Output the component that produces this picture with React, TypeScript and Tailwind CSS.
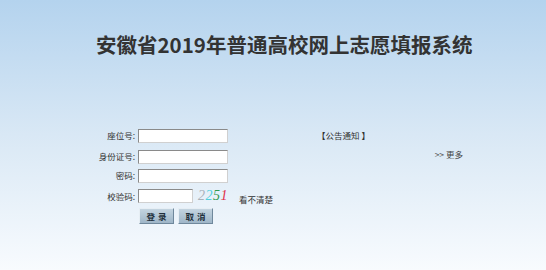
import React from "react";

const cjk = { fontFamily: '"Noto Sans CJK SC", "Noto Sans", sans-serif' };

function Row({ label, children, className = "" }: { label: string; children: React.ReactNode; className?: string }) {
  return (
    <div className={"flex items-center whitespace-nowrap " + className}>
      <div className="w-[48px] shrink-0 text-right text-[8.5px] leading-none text-[#333] pr-[1px]">{label}</div>
      <div className="ml-[2px] flex items-center">{children}</div>
    </div>
  );
}

function Input({ w = "w-[90px]" }: { w?: string }) {
  return (
    <div className={w + " shrink-0 h-[14px] bg-white border border-t-[#8a8a8a] border-l-[#8a8a8a] border-r-[#d0d0d0] border-b-[#d0d0d0]"} />
  );
}

function Btn({ text }: { text: string }) {
  return (
    <div className="w-[35px] h-[16px] flex items-center justify-center bg-gradient-to-b from-[#c3d4e0] to-[#9fb6c8] border border-t-[#e6eef4] border-l-[#e6eef4] border-r-[#6f889c] border-b-[#6f889c] text-[8.5px] leading-none font-bold text-[#22303c] tracking-[3px] pl-[3px]">
      {text}
    </div>
  );
}

export default function App() {
  return (
    <div className="w-[546px] h-[270px] overflow-hidden bg-gradient-to-b from-[#b4d3ee] via-[#d9e8f5] to-[#f8fbfe]" style={cjk}>
      <h1 className="pt-[34px] pl-[96px] text-[20.5px] font-bold leading-none text-[#333] whitespace-nowrap">
        安徽省2019年普通高校网上志愿填报系统
      </h1>
      <div className="flex mt-[74px]">
        <div className="ml-[88px] w-[141px] shrink-0 flex flex-col">
          <Row label="座位号:"><Input /></Row>
          <Row label="身份证号:" className="mt-[7px]"><Input /></Row>
          <Row label="密码:" className="mt-[5px]"><Input /></Row>
          <Row label="校验码:" className="mt-[6px]">
            <Input w="w-[55px]" />
            <span className="ml-[5px] text-[14px] italic leading-none tracking-[0.5px]" style={{ fontFamily: '"Liberation Serif", serif' }}>
              <span className="text-[#a8b0b8]">2</span>
              <span className="text-[#4fd0dc]">2</span>
              <span className="text-[#2f9a4f]">5</span>
              <span className="text-[#e0304a]">1</span>
            </span>
            <span className="ml-[11px] mt-[6px] text-[8.5px] leading-none text-[#333]">看不清楚</span>
          </Row>
          <div className="flex mt-[5px] ml-[51px] gap-[4px]">
            <Btn text="登录" />
            <Btn text="取消" />
          </div>
        </div>
        <div className="ml-[88px] w-[146px] flex flex-col">
          <div className="mt-[2px] text-[8.5px] leading-none text-[#333] whitespace-nowrap">
            <span className="font-bold">【</span>公告通知 <span className="font-bold">】</span>
          </div>
          <div className="mt-[11px] self-end text-[8.5px] leading-none text-[#444] whitespace-nowrap">
            <span className="text-[#555]">&gt;&gt;</span> 更多
          </div>
        </div>
      </div>
    </div>
  );
}
